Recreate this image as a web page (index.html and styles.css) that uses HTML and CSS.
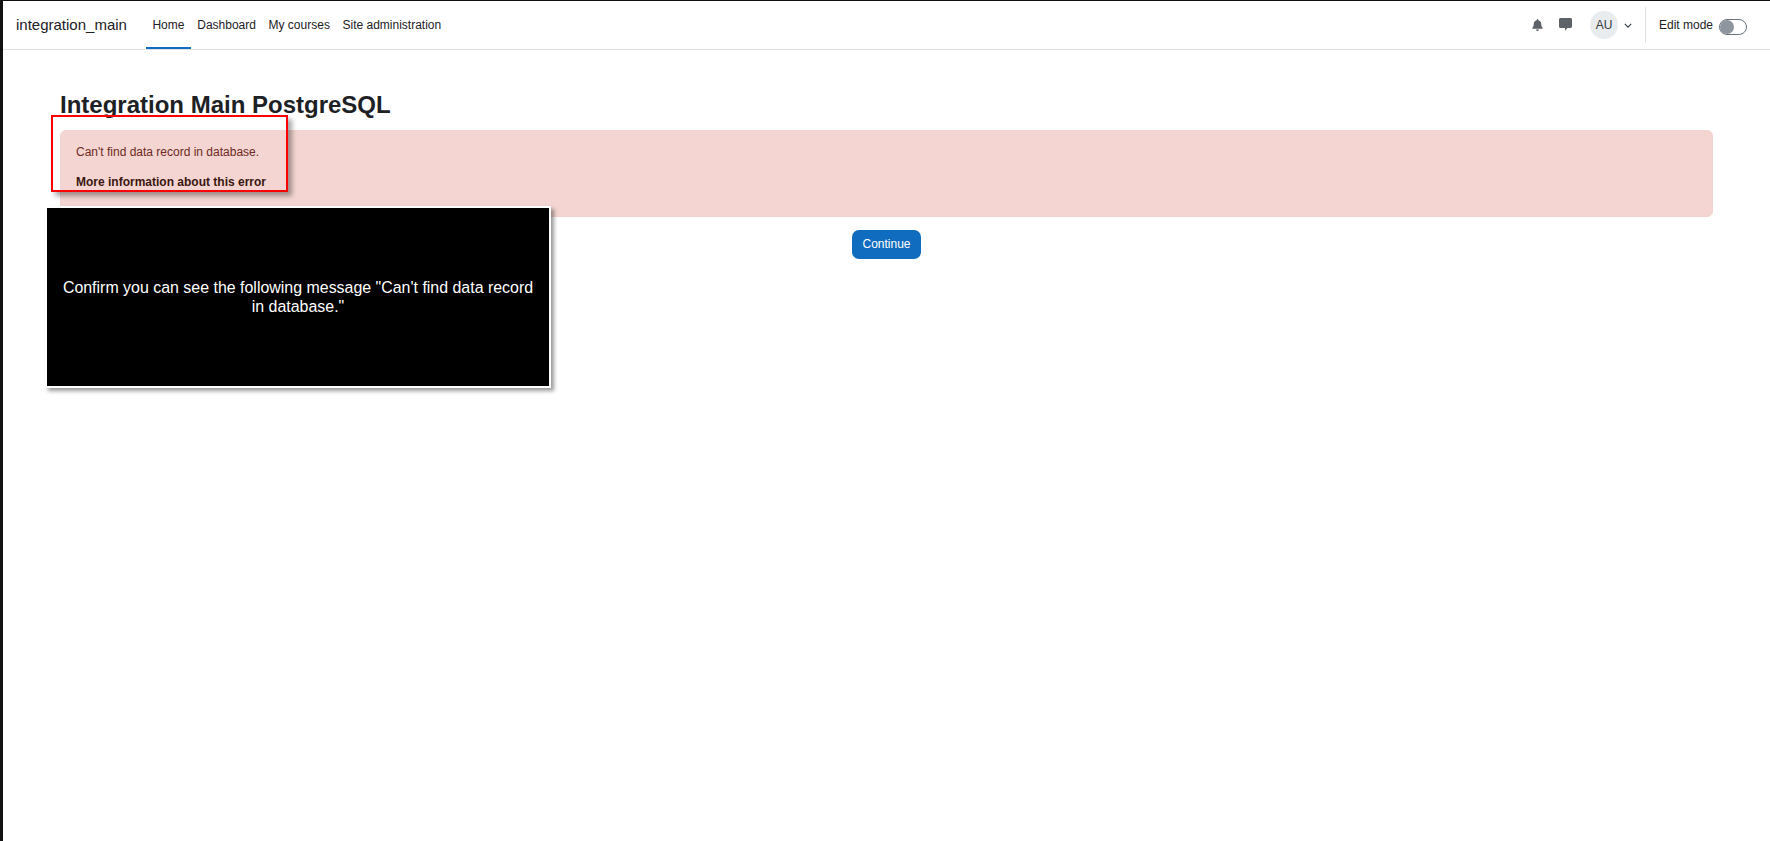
FILE: index.html
```html
<!DOCTYPE html>
<html lang="en">

<head>
    <meta charset="UTF-8">
    <meta name="viewport" content="width=device-width, initial-scale=1.0">
    <title>Integration Main PostgreSQL</title>
    <link rel="stylesheet" href="styles.css">
</head>

<body>
    <nav class="navbar">
        <a class="brand" href="#">integration_main</a>
        <ul class="primary-nav">
            <li><a class="active" href="#">Home</a></li>
            <li><a href="#">Dashboard</a></li>
            <li><a href="#">My courses</a></li>
            <li><a href="#">Site administration</a></li>
        </ul>
        <div class="usernav">
            <svg class="icon icon-bell" viewBox="0 0 448 512" aria-hidden="true">
                <path d="M224 512c35.32 0 63.97-28.65 63.97-64H160.03c0 35.35 28.65 64 63.97 64zm215.39-149.71c-19.32-20.76-55.47-51.99-55.47-154.29 0-77.7-54.48-139.9-127.94-155.16V32c0-17.67-14.32-32-31.98-32s-31.98 14.33-31.98 32v20.84C118.56 68.1 64.08 130.3 64.08 208c0 102.3-36.15 133.53-55.47 154.29-6 6.45-8.66 14.16-8.61 21.71.11 16.4 12.98 32 32.1 32h383.8c19.12 0 32-15.6 32.1-32 .05-7.55-2.61-15.27-8.61-21.71z" />
            </svg>
            <svg class="icon icon-comment" viewBox="0 0 13 13" aria-hidden="true">
                <path d="M1.500 0h10C12.330 0 13 .67 13 1.500v7c0 .83-.67 1.500-1.500 1.500H8.500L6 12.800V10H1.500C.67 10 0 9.330 0 8.500v-7C0 .67.67 0 1.500 0z" />
            </svg>
            <div class="user-menu">
                <span class="avatar">AU</span>
                <svg class="caret" viewBox="0 0 10 6" aria-hidden="true">
                    <path d="M1 1l4 4 4-4" />
                </svg>
            </div>
            <div class="divider"></div>
            <label class="edit-mode">
                <span>Edit mode</span>
                <span class="toggle"></span>
            </label>
        </div>
    </nav>

    <main class="page">
        <h1>Integration Main PostgreSQL</h1>
        <div class="alert">
            <p>Can't find data record in database.</p>
            <p class="more-info">More information about this error</p>
        </div>
        <div class="actions">
            <button type="button" class="btn">Continue</button>
        </div>
    </main>

    <div class="highlight"></div>
    <div class="callout">
        <p>Confirm you can see the following message "Can't find data record in database."</p>
    </div>
</body>

</html>
```

FILE: styles.css
```css
* {
    box-sizing: border-box;
}

html,
body {
    height: 100%;
}

body {
    position: relative;
    margin: 0;
    border-top: 1px solid #111;
    border-left: 3px solid #111;
    background-color: #fff;
    color: #1d2125;
    font-family: "Liberation Sans", Arial, sans-serif;
    font-size: 12px;
    line-height: 1.5;
    overflow: hidden;
}

a {
    color: inherit;
    text-decoration: none;
}

.navbar {
    display: flex;
    align-items: stretch;
    height: 49px;
    padding-left: 13px;
    padding-right: 23px;
    border-bottom: 1px solid #dee2e6;
}

.brand {
    align-self: center;
    margin-right: 19px;
    color: #1d2125;
    font-size: 15px;
}

.primary-nav {
    display: flex;
    margin: 0;
    padding: 0;
    list-style: none;
}

.primary-nav a {
    display: flex;
    align-items: center;
    height: 100%;
    padding: 2px 6.3px 0;
    border-bottom: 2px solid transparent;
}

.primary-nav a.active {
    padding: 2px 6.5px 0;
    border-bottom-color: #0f6cbf;
}

.usernav {
    display: flex;
    align-items: center;
    margin-left: auto;
}

.icon {
    fill: #5d6368;
}

.icon-bell {
    width: 11px;
    height: 12px;
    margin-right: 16px;
}

.icon-comment {
    width: 13px;
    height: 13px;
    margin-right: 18px;
    margin-bottom: 2px;
}

.user-menu {
    display: flex;
    align-items: center;
    gap: 6px;
}

.avatar {
    display: flex;
    align-items: center;
    justify-content: center;
    width: 28px;
    height: 28px;
    border-radius: 50%;
    background-color: #e9ecef;
    color: #343a40;
}

.caret {
    width: 8px;
    height: 5px;
    fill: none;
    stroke: #343a40;
    stroke-width: 1.4;
}

.divider {
    width: 1px;
    height: 36px;
    margin: 0 13px;
    background-color: #dee2e6;
}

.edit-mode {
    display: flex;
    align-items: center;
    gap: 6px;
}

.toggle {
    position: relative;
    width: 28px;
    height: 16px;
    margin-top: 4px;
    border: 1px solid #6a737b;
    border-radius: 8px;
    background-color: #fff;
}

.toggle::before {
    content: "";
    position: absolute;
    top: 0;
    left: 0;
    width: 14px;
    height: 14px;
    border-radius: 50%;
    background-color: #8f959e;
}

.page {
    padding: 41px 57px 0 57px;
}

h1 {
    margin: 0 0 10px;
    font-size: 24px;
    font-weight: 700;
    line-height: 1.2;
}

.alert {
    height: 87px;
    padding: 12px 15px;
    border: 1px solid #f3d3cf;
    border-radius: 6px;
    background-color: #f4d5d1;
    color: #6e2a22;
}

.alert p {
    margin: 0 0 12px;
}

.more-info {
    color: #3b1610;
    font-weight: 700;
}

.actions {
    display: flex;
    justify-content: center;
    margin-top: 13px;
}

.btn {
    height: 29px;
    padding: 0 10px;
    border: 0;
    border-radius: 7px;
    background-color: #0f6cbf;
    color: #fff;
    font: inherit;
}

.highlight {
    position: absolute;
    top: 114px;
    left: 48px;
    width: 237px;
    height: 77px;
    border: 2px solid #f00;
    box-shadow: 4px 4px 5px rgba(0, 0, 0, 0.35);
}

.callout {
    position: absolute;
    top: 205px;
    left: 42px;
    display: flex;
    align-items: center;
    justify-content: center;
    width: 506px;
    height: 182px;
    padding: 0 14px;
    border: 2px solid #fff;
    background-color: #000;
    box-shadow: 3px 3px 4px rgba(0, 0, 0, 0.4);
    color: #fff;
    font-size: 15.95px;
    line-height: 19px;
    text-align: center;
}

.callout p {
    margin: 0;
}
```
